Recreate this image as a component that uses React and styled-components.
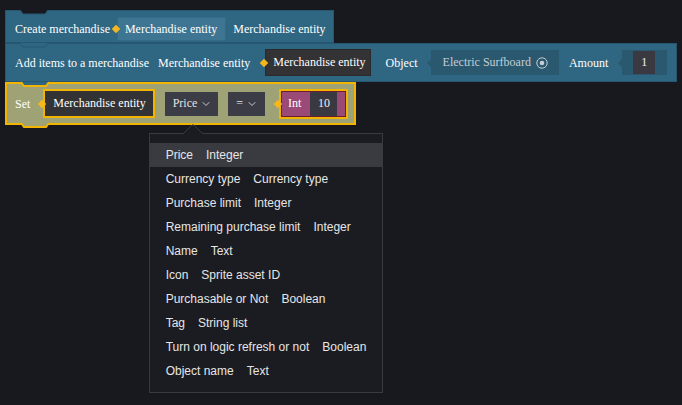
import React from 'react';
import styled, { createGlobalStyle } from 'styled-components';
import { ChevronDown } from 'lucide-react';

const Global = createGlobalStyle`
  html, body { margin: 0; padding: 0; background: #18191e; }
  body {
    width: 682px; height: 405px; overflow: hidden;
    font-family: "Liberation Serif", "Times New Roman", serif;
  }
`;

const Canvas = styled.div`
  padding: 10px 0 0 5px;
  display: flex;
  flex-direction: column;
  align-items: flex-start;
`;

const Block = styled.div`
  position: relative;
  display: flex;
  align-items: center;
  box-sizing: border-box;
  height: ${(p) => p.$h}px;
  padding: ${(p) => p.$pad};
  background: ${(p) => p.$bg};
  border: ${(p) => p.$bw}px solid ${(p) => p.$bc};
  color: #ffffff;
  font-size: 12px;
  white-space: nowrap;
  z-index: ${(p) => p.$z || 1};
`;

const Notch = styled.svg`
  position: absolute;
  left: 14px;
  overflow: visible;
  z-index: 2;
`;

const Label = styled.span`
  margin-left: ${(p) => p.$ml || 0}px;
  color: ${(p) => p.$color || '#ffffff'};
  line-height: 1;
`;

const Socket = styled.div`
  position: relative;
  display: flex;
  align-items: center;
  box-sizing: border-box;
  margin-left: ${(p) => p.$ml}px;
  height: ${(p) => p.$h}px;
  padding: 0 ${(p) => p.$pr}px 0 ${(p) => p.$pl}px;
  background: ${(p) => p.$bg};
  border: ${(p) => p.$bw}px solid ${(p) => p.$bc};
  box-shadow: ${(p) => p.$inset || 'none'};
  color: #ffffff;
`;

const Diamond = styled.span`
  position: absolute;
  left: ${(p) => p.$left}px;
  top: 50%;
  width: 6px;
  height: 6px;
  margin-top: -3px;
  background: #f5b81c;
  transform: rotate(45deg);
`;

const ArrowField = styled.div`
  position: relative;
  display: flex;
  align-items: center;
  box-sizing: border-box;
  margin-left: ${(p) => p.$ml}px;
  height: 25px;
  padding: 0 ${(p) => p.$pr}px 0 ${(p) => p.$pl}px;
  background: #29586f;
  color: #c6cdd4;
  &::before {
    content: '';
    position: absolute;
    left: -4px;
    top: 50%;
    margin-top: -4px;
    border-top: 4px solid transparent;
    border-bottom: 4px solid transparent;
    border-right: 4px solid #29586f;
  }
`;

const InnerBox = styled.div`
  display: flex;
  align-items: center;
  justify-content: center;
  margin-left: ${(p) => p.$ml || 0}px;
  width: ${(p) => p.$w}px;
  height: ${(p) => p.$h}px;
  background: #3a3841;
  color: #f2f2f2;
`;

const DropWrap = styled.div`
  position: relative;
  margin-left: 10px;
`;

const Dropdown = styled.div`
  display: flex;
  align-items: center;
  box-sizing: border-box;
  height: 24px;
  padding: 0 ${(p) => p.$pr}px 0 8px;
  background: #3b3c46;
  color: #e2e2e2;
  svg { margin-left: ${(p) => p.$gap}px; color: #c9c9cf; }
`;

const Menu = styled.div`
  position: absolute;
  left: -16px;
  top: calc(100% + 17px);
  width: 234px;
  height: 260px;
  box-sizing: border-box;
  padding: 9px 0;
  background: #1b1c21;
  border: 1px solid #393a40;
  font-family: "Liberation Sans", Arial, sans-serif;
  font-size: 12px;
  color: #e6e6e6;
  z-index: 10;
`;

const MenuArrow = styled.svg`
  position: absolute;
  left: 33px;
  top: -10px;
  overflow: visible;
`;

const MenuRow = styled.div`
  display: flex;
  align-items: center;
  height: 24px;
  padding-left: 16px;
  gap: 13px;
  background: ${(p) => (p.$active ? '#393b41' : 'transparent')};
`;

const SurfIcon = () => (
  <svg width="12" height="12" viewBox="0 0 12 12" style={{ marginLeft: 5 }}>
    <circle cx="6" cy="6" r="5.2" fill="none" stroke="#c6cdd4" strokeWidth="1" />
    <circle cx="6" cy="6" r="2.3" fill="#c6cdd4" />
  </svg>
);

const TopNotch = ({ fill, stroke, bw }) => (
  <Notch width="28" height="5" style={{ top: -bw }}>
    <path d={`M0 0 L3 4 L25 4 L28 0 Z`} fill={fill} />
    <path d={`M0 0 L3 4 L25 4 L28 0`} fill="none" stroke={stroke} strokeWidth={bw} />
  </Notch>
);

const BottomBump = ({ fill, stroke, bw }) => (
  <Notch width="28" height="6" style={{ bottom: -4 - bw }}>
    <path d={`M0 0 L3 4 L25 4 L28 0 Z`} fill={fill} />
    <path d={`M0 0 L3 4 L25 4 L28 0`} fill="none" stroke={stroke} strokeWidth={bw} />
  </Notch>
);

const fields = [
  ['Price', 'Integer'],
  ['Currency type', 'Currency type'],
  ['Purchase limit', 'Integer'],
  ['Remaining purchase limit', 'Integer'],
  ['Name', 'Text'],
  ['Icon', 'Sprite asset ID'],
  ['Purchasable or Not', 'Boolean'],
  ['Tag', 'String list'],
  ['Turn on logic refresh or not', 'Boolean'],
  ['Object name', 'Text'],
];

export default function App() {
  return (
    <>
      <Global />
      <Canvas>
        <Block $h={33} $pad="6px 7px 1px 9px" $bg="#2f6682" $bw={1} $bc="#275770">
          <TopNotch fill="#18191e" stroke="#275770" bw={1} />
          <Label>Create merchandise</Label>
          <Socket $ml={7} $h={24} $pl={7} $pr={8} $bg="#3e7592" $bw={1} $bc="#336a86">
            <Diamond $left={-5} />
            Merchandise entity
          </Socket>
          <Label $ml={7}>Merchandise entity</Label>
        </Block>

        <Block $h={39} $pad="0 9px" $bg="#2f6682" $bw={1} $bc="#275770">
          <TopNotch fill="#2f6682" stroke="#275770" bw={1} />
          <Label>Add items to a merchandise</Label>
          <Label $ml={9}>Merchandise entity</Label>
          <Socket $ml={15} $h={27} $pl={7} $pr={4} $bg="#333235" $bw={1} $bc="#2a2a2c">
            <Diamond $left={-5} />
            Merchandise entity
          </Socket>
          <Label $ml={15}>Object</Label>
          <ArrowField $ml={13} $pl={12} $pr={11}>
            Electric Surfboard
            <SurfIcon />
          </ArrowField>
          <Label $ml={10}>Amount</Label>
          <ArrowField $ml={14} $pl={11} $pr={12}>
            <InnerBox $w={22} $h={23}>1</InnerBox>
          </ArrowField>
        </Block>

        <Block $h={43} $pad="0 6px 0 8px" $bg="#9ea274" $bw={2} $bc="#f3b400" $z={3}>
          <TopNotch fill="#2f6682" stroke="#f3b400" bw={2} />
          <BottomBump fill="#9ea274" stroke="#f3b400" bw={2} />
          <Label>Set</Label>
          <Socket $ml={13} $h={29} $pl={8} $pr={7} $bg="#333235" $bw={2} $bc="#f3b400">
            <Diamond $left={-6} />
            Merchandise entity
          </Socket>
          <DropWrap>
            <Dropdown $pr={6} $gap={3}>
              Price
              <ChevronDown size={12} strokeWidth={2} />
            </Dropdown>
            <Menu>
              <MenuArrow width="20" height="10">
                <path d="M0 10 L9 1 L11 1 L20 10 Z" fill="#1b1c21" />
                <path d="M0 10 L9 1 L11 1 L20 10" fill="none" stroke="#393a40" strokeWidth="1" />
              </MenuArrow>
              {fields.map(([k, t], i) => (
                <MenuRow key={k} $active={i === 0}>
                  <span>{k}</span>
                  <span>{t}</span>
                </MenuRow>
              ))}
            </Menu>
          </DropWrap>
          <DropWrap>
            <Dropdown $pr={7} $gap={3}>
              =
              <ChevronDown size={12} strokeWidth={2} />
            </Dropdown>
          </DropWrap>
          <Socket $ml={14} $h={30} $pl={7} $pr={9} $bg="#9b4977" $bw={2} $bc="#f3b400" $inset="inset 0 0 0 1px #6a1e32">
            <Diamond $left={-6} />
            Int
            <InnerBox $ml={9} $w={27} $h={24}>10</InnerBox>
          </Socket>
        </Block>
      </Canvas>
    </>
  );
}
